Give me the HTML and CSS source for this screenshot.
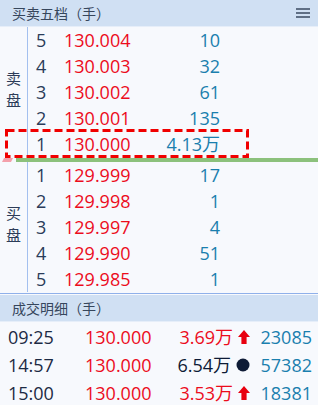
FILE: index.html
```html
<!DOCTYPE html>
<html lang="zh">
<head>
<meta charset="utf-8">
<link rel="stylesheet" href="styles.css">
</head>
<body>
<div class="panel">
  <div class="hdr">
    <span class="hdr-title">买卖五档（手）</span>
    <svg class="menu" width="14" height="10" viewBox="0 0 14 10"><path d="M0 1H14M0 5H14M0 9H14" stroke="#3a4a62" stroke-width="1.6"/></svg>
  </div>
  <div class="book">
    <div class="sect">
      <div class="side"><span>卖</span><span>盘</span></div>
      <div class="rows">
        <div class="row"><span class="lv">5</span><span class="px">130.004</span><span class="vol">10</span></div>
        <div class="row"><span class="lv">4</span><span class="px">130.003</span><span class="vol">32</span></div>
        <div class="row"><span class="lv">3</span><span class="px">130.002</span><span class="vol">61</span></div>
        <div class="row"><span class="lv">2</span><span class="px">130.001</span><span class="vol">135</span></div>
        <div class="row"><span class="lv">1</span><span class="px">130.000</span><span class="vol">4.13万</span></div>
      </div>
    </div>
    <div class="sep"><span class="sep-pink"></span><span class="sep-green"></span></div>
    <div class="sect">
      <div class="side"><span>买</span><span>盘</span></div>
      <div class="rows">
        <div class="row"><span class="lv">1</span><span class="px">129.999</span><span class="vol">17</span></div>
        <div class="row"><span class="lv">2</span><span class="px">129.998</span><span class="vol">1</span></div>
        <div class="row"><span class="lv">3</span><span class="px">129.997</span><span class="vol">4</span></div>
        <div class="row"><span class="lv">4</span><span class="px">129.990</span><span class="vol">51</span></div>
        <div class="row"><span class="lv">5</span><span class="px">129.985</span><span class="vol">1</span></div>
      </div>
    </div>
    <svg class="hl" width="244" height="29" viewBox="0 0 244 29"><rect x="1.5" y="1.5" width="241" height="26" fill="none" stroke="#f00000" stroke-width="3" stroke-dasharray="8 4"/></svg>
  </div>
  <div class="hdr hdr2">
    <span class="hdr-title">成交明细（手）</span>
  </div>
  <div class="trades">
    <div class="trow"><span class="t">09:25</span><span class="tp">130.000</span><span class="tv up">3.69万<svg class="ic" width="12" height="14" viewBox="0 0 12 14"><path d="M6 0L12 7H8.6V14H3.4V7H0Z" fill="#e8000f"/></svg></span><span class="tn">23085</span></div>
    <div class="trow"><span class="t">14:57</span><span class="tp">130.000</span><span class="tv nu">6.54万<svg class="ic" width="14" height="14" viewBox="0 0 14 14"><circle cx="7" cy="7" r="6.5" fill="#0e1b36"/></svg></span><span class="tn">57382</span></div>
    <div class="trow"><span class="t">15:00</span><span class="tp">130.000</span><span class="tv up">3.53万<svg class="ic" width="12" height="14" viewBox="0 0 12 14"><path d="M6 0L12 7H8.6V14H3.4V7H0Z" fill="#e8000f"/></svg></span><span class="tn">18381</span></div>
  </div>
</div>
</body>
</html>
```
FILE: styles.css
```css
html, body {
  margin: 0;
  padding: 0;
  background: #f7f9fd;
}
body {
  font-family: "Open Sans", "Noto Sans CJK SC", sans-serif;
  width: 318px;
  height: 405px;
  overflow: hidden;
}
.panel {
  display: flex;
  flex-direction: column;
}
.hdr {
  height: 26px;
  background: #d0e0f3;
  border-bottom: 1px solid #e6eef9;
  display: flex;
  align-items: center;
  justify-content: space-between;
  padding: 0 8px 0 12px;
}
.hdr-title {
  font-family: "Noto Sans CJK SC", sans-serif;
  font-size: 14px;
  color: #36465c;
  line-height: 1;
  margin-top: -1px;
}
.menu {
  margin-top: -1px;
}
.book {
  position: relative;
  border-bottom: 1px solid #8fb0ea;
  padding-bottom: 1px;
}
.sect {
  display: flex;
  height: 130px;
}
.side {
  width: 28px;
  box-sizing: border-box;
  border-right: 1px solid #a3c0ef;
  display: flex;
  flex-direction: column;
  justify-content: center;
  align-items: center;
  font-family: "Noto Sans CJK SC", sans-serif;
  font-size: 15px;
  line-height: 22px;
  color: #2c3c58;
  padding-bottom: 6px;
}
.rows {
  flex: 1;
  display: flex;
  flex-direction: column;
}
.row {
  height: 26px;
  display: flex;
  align-items: center;
  font-size: 18px;
  line-height: 1;
}
.lv {
  width: 28px;
  padding-left: 8px;
  color: #2a3c5a;
}
.px {
  width: 100px;
  color: #ec0c1c;
}
.vol {
  width: 56px;
  text-align: right;
  color: #1a7fae;
}
.sep {
  height: 5px;
  display: flex;
  align-items: flex-end;
}
.sep-pink {
  width: 11px;
  height: 4px;
  margin-left: 2px;
  background: #f4a0ab;
  clip-path: polygon(2px 0, 100% 0, calc(100% - 2px) 100%, 0 100%);
}
.sep-green {
  flex: 1;
  height: 4px;
  margin-left: 3px;
  background: #8cc17c;
}
.hl {
  position: absolute;
  left: 5px;
  top: 102px;
}
.hdr2 {
  margin-top: 1px;
}
.trades {
  display: flex;
  flex-direction: column;
  padding-top: 1px;
}
.trow {
  height: 28px;
  display: flex;
  align-items: center;
  font-size: 18px;
  line-height: 1;
}
.t {
  width: 77px;
  padding-left: 8px;
  color: #1c2a44;
}
.tp {
  width: 88px;
  color: #ec0c1c;
}
.tv {
  width: 77px;
  display: flex;
  align-items: center;
  justify-content: flex-end;
  gap: 5px;
}
.tv.up { color: #ec0c1c; }
.tv.nu { color: #0e1b36; }
.tn {
  width: 62px;
  text-align: right;
  color: #1a7fae;
}
```
